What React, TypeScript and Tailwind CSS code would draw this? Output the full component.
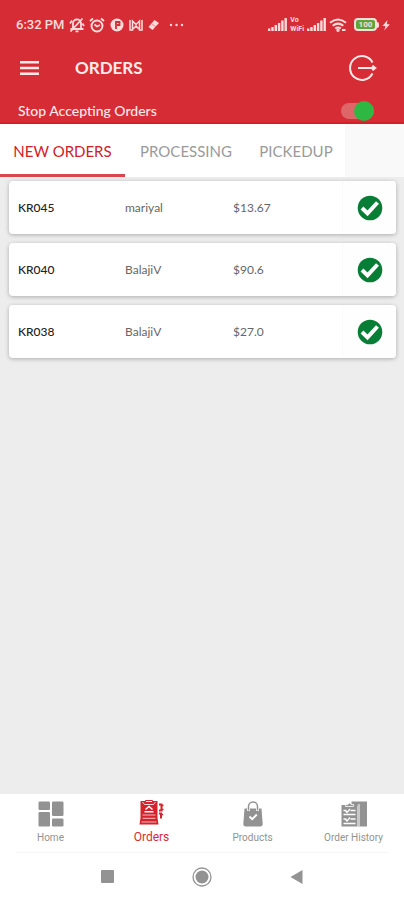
import { useState } from 'react';
import { clsx } from 'clsx';

// ==========================================
// Orders screen
// ==========================================

interface Order {
  id: string;
  customer: string;
  total: string;
}

interface NavItem {
  label: string;
  icon: React.ElementType;
}

const tabs = ['NEW ORDERS', 'PROCESSING', 'PICKEDUP'];

const orders: Order[] = [
  { id: 'KR045', customer: 'mariyal', total: '$13.67' },
  { id: 'KR040', customer: 'BalajiV', total: '$90.6' },
  { id: 'KR038', customer: 'BalajiV', total: '$27.0' },
];

const navItems: NavItem[] = [
  { label: 'Home', icon: HomeIcon },
  { label: 'Orders', icon: OrdersIcon },
  { label: 'Products', icon: ProductsIcon },
  { label: 'Order History', icon: HistoryIcon },
];

function HomeIcon() {
  return (
    <svg viewBox="0 0 26 26" className="h-[26px] w-[26px]" fill="currentColor">
      <rect x="0.5" y="0.5" width="11.5" height="8.5" rx="1.2" />
      <rect x="0.5" y="11" width="11.5" height="14.5" rx="1.2" />
      <rect x="14" y="0.5" width="11.5" height="14.5" rx="1.2" />
      <rect x="14" y="17.5" width="11.5" height="8" rx="1.2" />
    </svg>
  );
}

function OrdersIcon() {
  return (
    <svg viewBox="0 0 26 26" className="h-[26px] w-[26px]" fill="none">
      <path d="M1.500 1h17v17l1 6.500H.5L1.500 18z" fill="#d5222d" />
      <path d="M6.500 0.500h7v2h-7z" fill="#fff" stroke="#d5222d" strokeWidth="1" />
      <path d="M3.500 2l2 2.500h9l2-2.500" stroke="#fff" strokeOpacity="0.800" strokeWidth="1" />
      <path d="M6.500 9.500L10 6.500l3.500 3M5.500 11.700h9" stroke="#fff" strokeWidth="1.500" />
      <path d="M3.500 15h13M3.500 18.300h13" stroke="#fff" strokeOpacity="0.700" strokeWidth="1" />
      <path d="M2.500 22h15" stroke="#fff" strokeOpacity="0.700" strokeWidth="1" />
      <path d="M20 4.500h2.500v6H20M20 13.500h2v5" stroke="#d5222d" strokeWidth="2" />
      <path d="M22.500 5.500h2M22.500 9.500h2M21 14.500h3" stroke="#d5222d" strokeWidth="1.500" />
    </svg>
  );
}

function ProductsIcon() {
  return (
    <svg viewBox="0 0 26 26" className="h-[26px] w-[26px]" fill="none">
      <path d="M4.500 7.500h17l1.200 15.500q.2 2.500-2.200 2.500h-15q-2.400 0-2.200-2.500z" fill="currentColor" />
      <path d="M8.500 10V5.500a4.500 4.500 0 0 1 9 0V10" stroke="#fff" strokeWidth="3" />
      <path d="M8.500 9.500V5.500a4.500 4.500 0 0 1 9 0v4" stroke="currentColor" strokeWidth="1.500" />
      <path d="M9.500 15.500l2.700 2.700 4.600-4.700" stroke="#fff" strokeWidth="1.900" />
    </svg>
  );
}

function HistoryIcon() {
  return (
    <svg viewBox="0 0 26 26" className="h-[26px] w-[26px]" fill="none">
      <path d="M10.500 0.500h15.500v25h-9V4.500h-6.500z" fill="currentColor" />
      <path d="M18 3v22.500" stroke="#fff" strokeWidth="1" />
      <path d="M.5 4h16v21.500H.5z" fill="currentColor" />
      <path d="M4.500 5.500V3.500H7a1.500 1.500 0 0 1 3 0h2.500v2z" fill="currentColor" stroke="#fff" strokeWidth="0.800" />
      <path d="M2.500 9.500h3M9.500 9.500h5M2.500 13.500h12M2.500 18h3M9.500 18h5M2.500 22.500h12" stroke="#fff" strokeWidth="1.300" />
      <path d="M4.500 10l1.500 1.500L9 8M4.500 18.500L6 20l3-3.500" stroke="#fff" strokeWidth="1.200" />
    </svg>
  );
}

function SignalIcon() {
  return (
    <svg viewBox="0 0 19 13" className="h-[13px] w-[19px]" fill="currentColor">
      <path d="M0 10.500h2.400V13H0zM3.300 9h2.400v4H3.300zM6.600 7H9v6H6.600zM9.900 5h2.400v8H9.900zM13.200 2.500h2.400V13h-2.400zM16.500 0h2.400v13h-2.400z" />
    </svg>
  );
}

function StatusBar() {
  return (
    <div className="flex h-[49px] items-center justify-between pl-4 pr-[14px] text-[#ffdcdc]">
      <div className="flex items-center gap-1">
        <span className="font-['Roboto',sans-serif] text-[13px] font-medium leading-4">6:32 PM</span>
        {/* muted */}
        <svg viewBox="0 0 16 16" className="h-4 w-4" fill="none" stroke="currentColor" strokeWidth="1.800">
          <path d="M4 12V7a4 4 0 0 1 8-1v6M1.500 12h13M6.500 14.300h3M13.500 1.500l-12 13M1 6.500L3 3.500M13.500 6.500l1.500 2.500" />
        </svg>
        {/* alarm */}
        <svg viewBox="0 0 16 16" className="h-4 w-4" fill="none" stroke="currentColor" strokeWidth="1.900">
          <circle cx="8" cy="9" r="5.500" />
          <path d="M1 4l3-2.500M15 4l-3-2.500M5.500 7.500L8 9.500l3-1.500" />
        </svg>
        <svg viewBox="0 0 16 16" className="h-4 w-4" fill="none">
          <circle cx="8" cy="8" r="6.500" fill="currentColor" />
          <path d="M7 12V5h3.500v3H8" stroke="#d62c35" strokeWidth="1.800" />
        </svg>
        <svg viewBox="0 0 14 12" className="h-3 w-[14px]" fill="none" stroke="currentColor" strokeWidth="1.500">
          <path d="M1 1v10h2.500V2L7 5.500 10.500 2v9H13V1M4 10l3-3 3 3" />
        </svg>
        <svg viewBox="0 0 14 14" className="h-[14px] w-[14px]">
          <path d="M7.500 2l4.500 3-6.500 7L1.500 9z" fill="currentColor" />
          <path d="M5 6l4 3" stroke="#d62c35" strokeOpacity="0.500" />
        </svg>
        <svg viewBox="0 0 16 4" className="ml-1 h-1 w-4" fill="currentColor">
          <circle cx="2" cy="2" r="1.200" />
          <circle cx="7.500" cy="2" r="1.200" />
          <circle cx="13" cy="2" r="1.200" />
        </svg>
      </div>
      <div className="flex items-center gap-[3px]">
        <SignalIcon />
        <span className="grid font-['Roboto',sans-serif] text-[7px] font-bold leading-[9px]">
          <span>Vo</span>
          <span>WiFi</span>
        </span>
        <SignalIcon />
        <svg viewBox="0 0 18 14" className="h-[14px] w-[18px]" fill="none" stroke="currentColor" strokeWidth="2">
          <path d="M1 4.800q8-6.500 16 0M3.700 7.800q5.300-4.300 10.600 0M6.200 10.500q2.800-2 5.600 0" />
          <circle cx="9" cy="12.300" r="0.700" />
          <path d="M13 12h3.500" />
        </svg>
        <div className="flex items-center pl-1">
          <span className="flex h-[13px] w-[23px] items-center justify-center rounded border-2 border-current bg-[#5da63b] font-['Roboto',sans-serif] text-[8px] font-bold leading-none">
            100
          </span>
          <span className="h-[6px] w-[2px] rounded-r-sm bg-current" />
        </div>
        <svg viewBox="0 0 8 12" className="h-3 w-2" fill="currentColor">
          <path d="M5.500 1L.5 7h3L2.300 11.500 7.800 5.300h-3z" />
        </svg>
      </div>
    </div>
  );
}

function Header() {
  const [accepting, setAccepting] = useState(true);

  return (
    <header className="border-b-2 border-[#d41f26] bg-[#d62c35] text-[#ffeaea]">
      <StatusBar />
      <div className="flex h-[37px] items-center px-5">
        <button aria-label="Menu" className="mr-9">
          <svg viewBox="0 0 19 14" className="h-[14px] w-[19px]" stroke="currentColor" strokeWidth="2.400">
            <path d="M0 1.300h19M0 7h19M0 12.700h19" />
          </svg>
        </button>
        <h1 className="flex-1 text-[17px] font-bold leading-6">ORDERS</h1>
        <button aria-label="Log out" className="mr-[7px]">
          <svg viewBox="0 0 28 28" className="h-7 w-7" fill="none" stroke="currentColor" strokeWidth="2">
            <path d="M23.500 8.500a11.900 11.900 0 1 0 0 11M9 14h15" />
            <path d="M24 11.200l3.500 2.800-3.500 2.800-2-2.800z" fill="currentColor" strokeWidth="0.500" />
          </svg>
        </button>
      </div>
      <label className="flex h-9 items-center justify-between pl-[18px] pr-[30px] pt-[14px]">
        <span className="text-sm font-medium leading-5">Stop Accepting Orders</span>
        <input
          type="checkbox"
          role="switch"
          checked={accepting}
          onChange={(e) => setAccepting(e.target.checked)}
          className="flex h-4 w-[33px] appearance-none items-center rounded-full bg-[#de6668] before:h-5 before:w-5 before:rounded-full before:bg-white checked:justify-end checked:before:bg-[#2eb742]"
        />
      </label>
    </header>
  );
}

function OrderCard({ order }: { order: Order }) {
  return (
    <li className="grid h-[53px] grid-cols-[107fr_108fr_109fr_54fr] items-center rounded bg-white pl-[9px] text-xs text-[#666] shadow-[0_1px_4px_rgba(0,0,0,0.28)]">
      <span className="font-medium text-[#222]">{order.id}</span>
      <span>{order.customer}</span>
      <span>{order.total}</span>
      <button
        aria-label={`Accept order ${order.id}`}
        className="flex h-full items-center justify-center rounded-r border-l border-[#fafafa] bg-[#fefefe]"
      >
        <svg viewBox="0 0 26 26" className="h-[26px] w-[26px]" fill="none">
          <circle cx="13" cy="13" r="12.300" fill="#087d35" />
          <path d="M5 13l5.500 5.300L20.500 7.500" stroke="#fff" strokeWidth="4" />
        </svg>
      </button>
    </li>
  );
}

export default function App() {
  const [activeTab, setActiveTab] = useState('NEW ORDERS');
  const [activeNav, setActiveNav] = useState('Orders');

  return (
    <div className="flex min-h-screen flex-col bg-[#ededed] font-['Lato',sans-serif]">
      <Header />

      {/* Tabs */}
      <div role="tablist" className="grid h-[53px] grid-cols-[125fr_122fr_98fr_59fr] bg-[#f9f9f9]">
        {tabs.map((tab) => (
          <button
            key={tab}
            role="tab"
            aria-selected={tab === activeTab}
            onClick={() => setActiveTab(tab)}
            className={clsx(
              'whitespace-nowrap border-b-[3px] bg-white pt-[5px] text-[15px]',
              tab === activeTab ? 'border-[#d8474e] text-[#d02028]' : 'border-white text-[#9a9a9a]'
            )}
          >
            {tab}
          </button>
        ))}
      </div>

      <main className="flex-1 px-2 pt-1">
        <ul className="flex flex-col gap-[9px] pl-px">
          {orders.map((order) => (
            <OrderCard key={order.id} order={order} />
          ))}
        </ul>
      </main>

      {/* Bottom navigation */}
      <footer className="bg-white font-['Roboto',sans-serif]">
        <nav className="grid h-[58px] grid-cols-4">
          {navItems.map((item) => {
            const Icon = item.icon;
            const isActive = item.label === activeNav;

            return (
              <button
                key={item.label}
                onClick={() => setActiveNav(item.label)}
                className={clsx(
                  'flex flex-col items-center gap-[3px] leading-4',
                  isActive ? 'pt-[6px] text-xs text-[#d42b36]' : 'pt-[7px] text-[10px] text-[#929292]'
                )}
              >
                <Icon />
                <span>{item.label}</span>
              </button>
            );
          })}
        </nav>
        {/* System buttons */}
        <div className="mx-4 flex h-12 items-center justify-center gap-[78px] border-t border-[#f5f5f5] text-[#939393]">
          <button aria-label="Recent apps">
            <svg viewBox="0 0 13 13" className="h-[13px] w-[13px]" fill="currentColor">
              <rect width="13" height="13" rx="1" />
            </svg>
          </button>
          <button aria-label="Home screen">
            <svg viewBox="0 0 20 20" className="h-5 w-5">
              <circle cx="10" cy="10" r="9" fill="none" stroke="currentColor" strokeWidth="1.300" />
              <circle cx="10" cy="10" r="6.500" fill="currentColor" />
            </svg>
          </button>
          <button aria-label="Back">
            <svg viewBox="0 0 13 14" className="h-[14px] w-[13px]" fill="currentColor">
              <path d="M12.500 0v14L.5 7z" />
            </svg>
          </button>
        </div>
      </footer>
    </div>
  );
}
